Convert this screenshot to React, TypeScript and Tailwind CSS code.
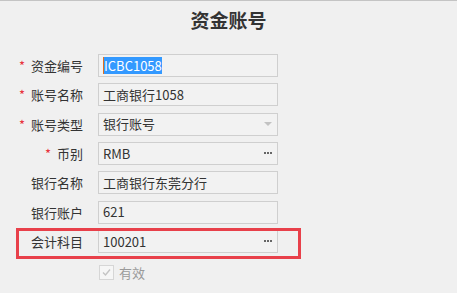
const font = { fontFamily: '"Noto Sans CJK SC", "Microsoft YaHei", "Liberation Sans", sans-serif' };

type Field = { label: string; value: string; required?: boolean; suffix?: 'dots' | 'arrow'; selected?: boolean; boxed?: boolean };

const fields: Field[] = [
  { label: '资金编号', value: 'ICBC1058', required: true, selected: true },
  { label: '账号名称', value: '工商银行1058', required: true },
  { label: '账号类型', value: '银行账号', required: true, suffix: 'arrow' },
  { label: '币别', value: 'RMB', required: true, suffix: 'dots' },
  { label: '银行名称', value: '工商银行东莞分行' },
  { label: '银行账户', value: '621' },
  { label: '会计科目', value: '100201', suffix: 'dots', boxed: true },
];

function Dots() {
  return (
    <div className="flex gap-[1px]">
      <span className="h-[2px] w-[2px] bg-[#666]" />
      <span className="h-[2px] w-[2px] bg-[#666]" />
      <span className="h-[2px] w-[2px] bg-[#666]" />
    </div>
  );
}

function Arrow() {
  return <div className="h-0 w-0 border-x-[4px] border-t-[4px] border-x-transparent border-t-[#c2c2c2]" />;
}

function Row({ f }: { f: Field }) {
  return (
    <div className="relative flex items-center">
      <div className="w-[83px] text-right text-[13px] leading-[23px] text-[#333]">
        {f.required ? <span className="mr-[6px] text-[#e8323c]">*</span> : null}
        {f.label}
      </div>
      <div className="ml-[15px] flex h-[23px] w-[180px] items-center justify-between border border-[#cfcfcf] bg-[#f2f2f2] pl-[4px] pr-[5px] text-[13px] text-[#333]">
        {f.selected ? (
          <span className="border-l border-[#e07020] bg-[#3399ff] leading-[17px] text-white">ICBC1058</span>
        ) : (
          <span>{f.value}</span>
        )}
        {f.suffix === 'dots' ? <Dots /> : f.suffix === 'arrow' ? <Arrow /> : null}
      </div>
      {f.boxed ? <div className="absolute left-[16px] top-[-2px] h-[31px] w-[285px] border-[3px] border-[#e8404a]" /> : null}
    </div>
  );
}

export default function App() {
  return (
    <div className="h-[293px] w-[457px] overflow-hidden border-t border-[#c4c4c4] bg-[#f0f0f0]" style={font}>
      <div className="mt-[5px] text-center text-[19px] font-bold leading-[28px] text-[#333]">资金账号</div>
      <div className="mt-[20px] flex flex-col gap-[6.33px]">
        {fields.map((f) => <Row key={f.label} f={f} />)}
      </div>
      <div className="ml-[99px] mt-[10px] flex items-center gap-[5px]">
        <div className="flex h-[15px] w-[15px] items-center justify-center border border-[#d6d6d6] bg-[#f6f6f6]">
          <svg width="11" height="11" viewBox="0 0 11 11"><path d="M2 5.5 L4.5 8 L9 2.5" fill="none" stroke="#c4c4c4" strokeWidth="1.4" /></svg>
        </div>
        <span className="text-[13px] text-[#9a9a9a]">有效</span>
      </div>
    </div>
  );
}
